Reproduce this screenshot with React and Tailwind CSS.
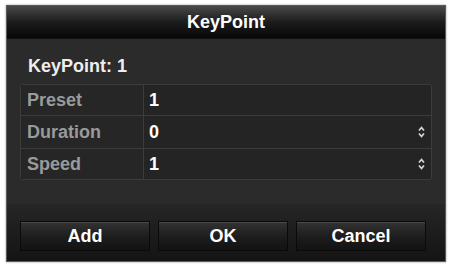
import React from "react";

const rows = [
  { label: "Preset", value: "1", spin: false, h: "h-[30px]" },
  { label: "Duration", value: "0", spin: true, h: "h-[33px]" },
  { label: "Speed", value: "1", spin: true, h: "h-[31px]" },
];

function Spin() {
  return (
    <svg width="7" height="12" viewBox="0 0 7 12" className="text-[#d8d8d8]">
      <path d="M1 4.5 L3.5 1.5 L6 4.5" fill="none" stroke="currentColor" strokeWidth="1.7" />
      <path d="M1 7.5 L3.5 10.5 L6 7.5" fill="none" stroke="currentColor" strokeWidth="1.7" />
    </svg>
  );
}

export default function App() {
  return (
    <div className="w-[451px] h-[265px] bg-white pt-[5px] pl-[6px] font-['Liberation_Sans',Arial,sans-serif]">
      <div className="w-[440px] h-[257px] flex flex-col bg-[#2b2b2b] border border-[#5a5a5a] shadow-[0_0_2px_rgba(0,0,0,0.4)]">
        {/* title bar */}
        <div className="h-[33px] flex items-center justify-center bg-gradient-to-b from-[#4a4a4a] via-[#1c1c1c] to-[#080808] border-b border-[#111]">
          <span className="text-white font-bold text-[18px]">KeyPoint</span>
        </div>

        <div className="flex-1 flex flex-col px-[13px]">
          <div className="h-[45px] flex items-end pb-[4px] pl-[8px]">
            <span className="text-[#eeeeee] font-bold text-[18px]">KeyPoint: 1</span>
          </div>
          <div className="border border-[#3c3c3c] rounded-[3px] bg-[#242424]">
            {rows.map((r, i) => (
              <div
                key={r.label}
                className={`flex ${r.h} ${i > 0 ? "border-t border-[#3c3c3c]" : ""}`}
              >
                <div className="w-[123px] flex items-center pl-[6px] border-r border-[#3c3c3c] bg-[#262626]">
                  <span className="text-[#9a9a9a] font-bold text-[18px]">{r.label}</span>
                </div>
                <div className="flex-1 flex items-center justify-between pl-[5px] pr-[6px]">
                  <span className="text-white font-bold text-[18px]">{r.value}</span>
                  {r.spin && <Spin />}
                </div>
              </div>
            ))}
          </div>
        </div>

        {/* footer */}
        <div className="h-[57px] bg-gradient-to-b from-[#262626] to-[#141414] flex items-start gap-[8px] px-[13px] pt-[17px]">
          {["Add", "OK", "Cancel"].map((b) => (
            <button
              key={b}
              className="w-[130px] h-[30px] flex items-center justify-center bg-gradient-to-b from-[#333] via-[#1e1e1e] to-[#121212] border border-[#0a0a0a] shadow-[inset_0_1px_0_#4a4a4a] text-white font-bold text-[18px]"
            >
              {b}
            </button>
          ))}
        </div>
      </div>
    </div>
  );
}
